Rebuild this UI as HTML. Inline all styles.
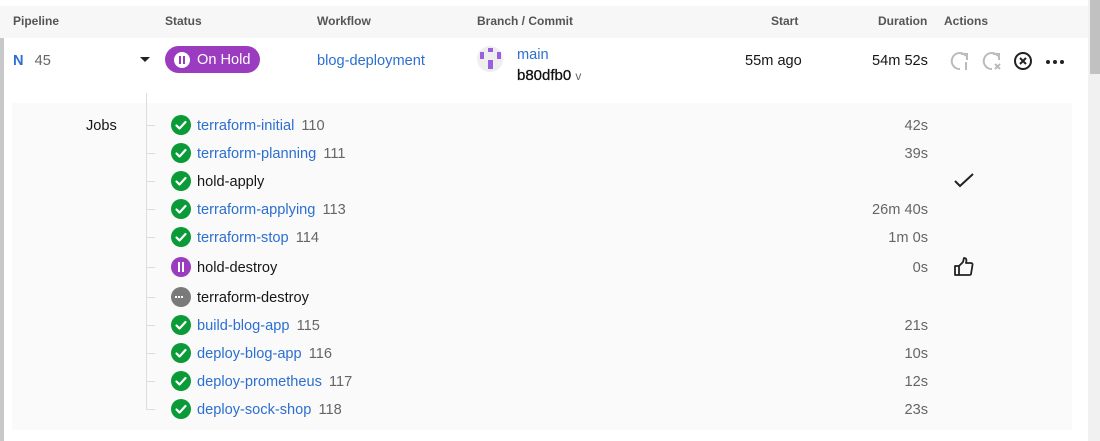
<!DOCTYPE html>
<html><head><meta charset="utf-8"><style>
*{margin:0;padding:0;box-sizing:border-box}
body{width:1100px;height:441px;background:#fff;font-family:"Liberation Sans",Arial,sans-serif;position:relative;overflow:hidden;color:#161616}
.a{position:absolute;white-space:nowrap}
.h{font-size:12px;font-weight:bold;color:#555;top:14px}
.blue{color:#2c6fd1}
.n{color:#666;margin-left:3px}
.r{font-size:14.6px;margin-top:1px}
.ic{position:absolute;left:171px;width:20px;height:20px;border-radius:50%}
.g{background:#0b9a38}
.line{position:absolute;left:146px;width:9px;height:1px;background:#ddd}
.dur{position:absolute;right:172px;font-size:14.6px;color:#666;margin-top:1px}
</style></head><body>
<div class="a" style="left:0;top:6px;width:1088px;height:32px;background:#f7f7f7"></div>
<div class="a h" style="left:13px">Pipeline</div>
<div class="a h" style="left:165px">Status</div>
<div class="a h" style="left:317px">Workflow</div>
<div class="a h" style="left:477px">Branch / Commit</div>
<div class="a h" style="left:771px">Start</div>
<div class="a h" style="left:878px">Duration</div>
<div class="a h" style="left:944px">Actions</div>
<div class="a" style="left:0;top:38px;width:4px;height:403px;background:#c8c8c8"></div>
<div class="a" style="left:1088px;top:0;width:12px;height:441px;background:#f1f1f1"></div>
<div class="a" style="left:1090px;top:0;width:10px;height:74px;background:#c1c1c1"></div>

<div class="a r" style="left:13px;top:52px"><b class="blue">N</b>&nbsp; <span class="n">45</span></div>
<div class="a" style="left:140px;top:57px;width:0;height:0;border-left:5px solid transparent;border-right:5px solid transparent;border-top:5px solid #222"></div>
<div class="a" style="left:165px;top:46px;width:95px;height:27px;border-radius:14px;background:#9b3bbf;color:#fff;font-size:14.6px;line-height:28px;padding-left:32px">On Hold</div>
<div class="a" style="left:174px;top:52px;width:16px;height:16px;border-radius:50%;background:#fff"></div>
<div class="a" style="left:179px;top:56px;width:2px;height:8px;background:#9b3bbf"></div>
<div class="a" style="left:183px;top:56px;width:2px;height:8px;background:#9b3bbf"></div>
<div class="a r blue" style="left:317px;top:52px">blog-deployment</div>
<div class="a" style="left:477px;top:46px;width:26px;height:26px;border-radius:50%;background:#eee"></div>
<div class="a" style="left:488px;top:48px;width:5px;height:4px;background:#9a5ee0"></div>
<div class="a" style="left:480px;top:52px;width:4px;height:7px;background:#9a5ee0"></div>
<div class="a" style="left:497px;top:52px;width:4px;height:7px;background:#9a5ee0"></div>
<div class="a" style="left:488px;top:60px;width:5px;height:9px;background:#9a5ee0"></div>
<div class="a r blue" style="left:517px;top:46px">main</div>
<div class="a" style="left:517px;top:67px;font-size:15px;color:#111;-webkit-text-stroke:0.3px #111">b80dfb0 <span style="font-size:12px;-webkit-text-stroke:0;color:#666">v</span></div>
<div class="a r" style="left:745px;top:52px">55m ago</div>
<div class="a r" style="left:872px;top:52px">54m 52s</div>
<svg class="a" style="left:948px;top:49px" width="24" height="24" viewBox="0 0 24 24" fill="none" stroke="#bbb" stroke-width="2"><path d="M18 7A8 8 0 1 0 12 20"/><path d="M13 5h6v6"/><path d="M18 13v8"/></svg>
<svg class="a" style="left:980px;top:49px" width="24" height="24" viewBox="0 0 24 24" fill="none" stroke="#bbb" stroke-width="2"><path d="M18 7A8 8 0 1 0 12 20"/><path d="M13 5h6v6"/><path d="M15 15l5 5M20 15l-5 5"/></svg>
<svg class="a" style="left:1013px;top:51px" width="20" height="20" viewBox="0 0 20 20" fill="none" stroke="#222" stroke-width="2"><circle cx="10" cy="10" r="8"/><path d="M7 7l6 6M13 7l-6 6"/></svg>
<div class="a" style="left:1046px;top:60px;width:4px;height:4px;border-radius:50%;background:#222;box-shadow:7px 0 #222,14px 0 #222"></div>

<div class="a" style="left:12px;top:103px;width:1060px;height:327px;background:#fafafa"></div>
<div class="a" style="left:146px;top:93px;width:1px;height:317px;background:#ddd"></div>
<div class="a r" style="left:86px;top:117px">Jobs</div>

<div class="line" style="top:125px"></div><div class="ic g" style="top:115px"></div><div class="a r" style="left:197px;top:117px"><span class="blue">terraform-initial</span> <span class="n">110</span></div><div class="a dur" style="top:117px">42s</div>
<div class="line" style="top:153px"></div><div class="ic g" style="top:143px"></div><div class="a r" style="left:197px;top:145px"><span class="blue">terraform-planning</span> <span class="n">111</span></div><div class="a dur" style="top:145px">39s</div>
<div class="line" style="top:181px"></div><div class="ic g" style="top:171px"></div><div class="a r" style="left:197px;top:173px">hold-apply</div>
<div class="line" style="top:209px"></div><div class="ic g" style="top:199px"></div><div class="a r" style="left:197px;top:201px"><span class="blue">terraform-applying</span> <span class="n">113</span></div><div class="a dur" style="top:201px">26m 40s</div>
<div class="line" style="top:237px"></div><div class="ic g" style="top:227px"></div><div class="a r" style="left:197px;top:229px"><span class="blue">terraform-stop</span> <span class="n">114</span></div><div class="a dur" style="top:229px">1m 0s</div>
<div class="line" style="top:267px"></div><div class="ic" style="top:257px;background:#9b3bbf"></div><div class="a" style="left:178px;top:262px;width:2px;height:10px;background:#fff"></div><div class="a" style="left:182px;top:262px;width:2px;height:10px;background:#fff"></div><div class="a r" style="left:197px;top:259px">hold-destroy</div><div class="a dur" style="top:259px">0s</div>
<div class="line" style="top:297px"></div><div class="ic" style="top:287px;background:#7a7a7a"></div><div class="a" style="left:175px;top:296px;width:2px;height:2px;background:#fff;box-shadow:3px 0 #fff,6px 0 #fff"></div><div class="a r" style="left:197px;top:289px">terraform-destroy</div>
<div class="line" style="top:325px"></div><div class="ic g" style="top:315px"></div><div class="a r" style="left:197px;top:317px"><span class="blue">build-blog-app</span> <span class="n">115</span></div><div class="a dur" style="top:317px">21s</div>
<div class="line" style="top:353px"></div><div class="ic g" style="top:343px"></div><div class="a r" style="left:197px;top:345px"><span class="blue">deploy-blog-app</span> <span class="n">116</span></div><div class="a dur" style="top:345px">10s</div>
<div class="line" style="top:381px"></div><div class="ic g" style="top:371px"></div><div class="a r" style="left:197px;top:373px"><span class="blue">deploy-prometheus</span> <span class="n">117</span></div><div class="a dur" style="top:373px">12s</div>
<div class="line" style="top:409px"></div><div class="ic g" style="top:399px"></div><div class="a r" style="left:197px;top:401px"><span class="blue">deploy-sock-shop</span> <span class="n">118</span></div><div class="a dur" style="top:401px">23s</div>

<svg class="a" style="left:171px;top:115px" width="20" height="320" viewBox="0 0 20 320" fill="none" stroke="#fff" stroke-width="2.2" stroke-linecap="round" stroke-linejoin="round">
<path d="M5.5 10.5l3 3 6-6.5"/><path d="M5.5 38.5l3 3 6-6.5"/><path d="M5.5 66.5l3 3 6-6.5"/><path d="M5.5 94.5l3 3 6-6.5"/><path d="M5.5 122.5l3 3 6-6.5"/>
<path d="M5.5 210.5l3 3 6-6.5"/><path d="M5.5 238.5l3 3 6-6.5"/><path d="M5.5 266.5l3 3 6-6.5"/><path d="M5.5 294.5l3 3 6-6.5"/>
</svg>
<svg class="a" style="left:953px;top:172px" width="22" height="18" viewBox="0 0 22 18" fill="none" stroke="#222" stroke-width="2"><path d="M2 9l5 5L20 2"/></svg>
<svg class="a" style="left:953px;top:256px" width="22" height="22" viewBox="0 0 22 22" fill="none" stroke="#222" stroke-width="1.8" stroke-linejoin="round"><path d="M2 10h4v9H2z"/><path d="M6 10l4-4 1-4c2 0 3 1 2 5h5c1 0 2 1 1.5 2L18 18c0 1-1 1-2 1H6"/></svg>
</body></html>
